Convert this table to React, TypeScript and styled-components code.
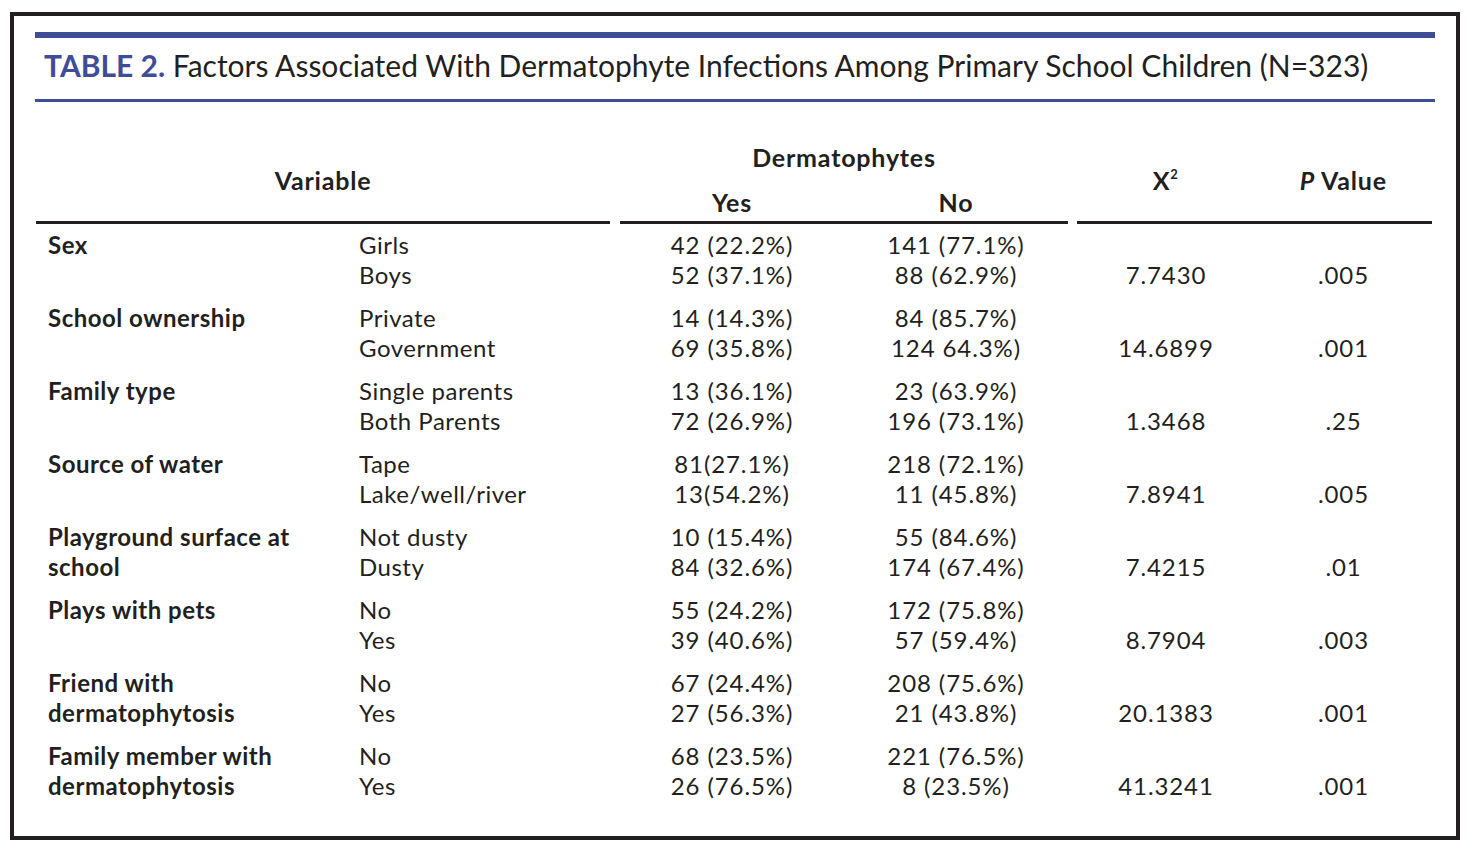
import React from 'react'
import styled, { createGlobalStyle } from 'styled-components'

const INK = '#231f20'
const BLUE = '#3f4d97'
const COLUMNS = '310px 264px 10px 224px 224px 9px 178px 177px'

type Group = {
  label: React.ReactNode
  levels: [string, string]
  yes: [string, string]
  no: [string, string]
  chi: string
  p: string
}

const groups: Group[] = [
  { label: 'Sex', levels: ['Girls', 'Boys'], yes: ['42 (22.2%)', '52 (37.1%)'], no: ['141 (77.1%)', '88 (62.9%)'], chi: '7.7430', p: '.005' },
  { label: 'School ownership', levels: ['Private', 'Government'], yes: ['14 (14.3%)', '69 (35.8%)'], no: ['84 (85.7%)', '124 64.3%)'], chi: '14.6899', p: '.001' },
  { label: 'Family type', levels: ['Single parents', 'Both Parents'], yes: ['13 (36.1%)', '72 (26.9%)'], no: ['23 (63.9%)', '196 (73.1%)'], chi: '1.3468', p: '.25' },
  { label: 'Source of water', levels: ['Tape', 'Lake/well/river'], yes: ['81(27.1%)', '13(54.2%)'], no: ['218 (72.1%)', '11 (45.8%)'], chi: '7.8941', p: '.005' },
  { label: <>Playground surface at<br />school</>, levels: ['Not dusty', 'Dusty'], yes: ['10 (15.4%)', '84 (32.6%)'], no: ['55 (84.6%)', '174 (67.4%)'], chi: '7.4215', p: '.01' },
  { label: 'Plays with pets', levels: ['No', 'Yes'], yes: ['55 (24.2%)', '39 (40.6%)'], no: ['172 (75.8%)', '57 (59.4%)'], chi: '8.7904', p: '.003' },
  { label: <>Friend with<br />dermatophytosis</>, levels: ['No', 'Yes'], yes: ['67 (24.4%)', '27 (56.3%)'], no: ['208 (75.6%)', '21 (43.8%)'], chi: '20.1383', p: '.001' },
  { label: <>Family member with<br />dermatophytosis</>, levels: ['No', 'Yes'], yes: ['68 (23.5%)', '26 (76.5%)'], no: ['221 (76.5%)', '8 (23.5%)'], chi: '41.3241', p: '.001' },
]

const GlobalStyle = createGlobalStyle`
  body {
    margin: 0;
    background: #ffffff;
    font-family: Lato, "Liberation Sans", sans-serif;
    color: ${INK};
  }
`

const Frame = styled.div`
  box-sizing: border-box;
  width: 1450px;
  height: 828px;
  margin: 12px 0 0 10px;
  border: 4px solid ${INK};
  padding: 16px 21px 0;
`

const TitleBar = styled.div`
  border-top: 6px solid ${BLUE};
  border-bottom: 3px solid ${BLUE};
  padding: 7px 0 14px 9px;
  font-size: 30px;
  line-height: 40px;
  white-space: nowrap;
`

const TableLabel = styled.span`
  color: ${BLUE};
  font-weight: 700;
`

const Table = styled.div`
  margin: 40px 0 0 1px;
  width: 1396px;
`

const HeadRow = styled.div`
  display: grid;
  grid-template-columns: ${COLUMNS};
`

const HeadGroup = styled.div<{ $col: string }>`
  grid-column: ${(p) => p.$col};
  display: grid;
  grid-template-columns: 1fr 1fr;
  grid-template-rows: 30px 30px;
  row-gap: 15px;
  padding-bottom: 4px;
  border-bottom: 3px solid ${INK};
  font-size: 25px;
  font-weight: 700;
  line-height: 30px;
  letter-spacing: 0.8px;
  text-align: center;
`

const HeadCell = styled.div<{ $span?: boolean; $full?: boolean }>`
  grid-column: ${(p) => (p.$full ? '1 / 3' : 'auto')};
  grid-row: ${(p) => (p.$span ? '1 / 3' : 'auto')};
  align-self: center;
`

const Sup = styled.sup`
  font-size: 13px;
  line-height: 0;
  vertical-align: 11px;
`

const Body = styled.div`
  display: flex;
  flex-direction: column;
  gap: 13px;
  margin-top: 6px;
`

const GroupRow = styled.div`
  display: grid;
  grid-template-columns: ${COLUMNS};
  grid-template-rows: 30px 30px;
  font-size: 24px;
  line-height: 30px;
  white-space: nowrap;
`

const Label = styled.div`
  grid-column: 1;
  grid-row: 1 / 3;
  padding-left: 12px;
  font-weight: 700;
  letter-spacing: 0.5px;
`

const Level = styled.div<{ $row: number }>`
  grid-column: 2;
  grid-row: ${(p) => p.$row};
  padding-left: 13px;
  letter-spacing: 0.5px;
`

const Value = styled.div<{ $col: number; $row: number }>`
  grid-column: ${(p) => p.$col};
  grid-row: ${(p) => p.$row};
  text-align: center;
  letter-spacing: 0.9px;
`

export default function App() {
  return (
    <>
      <GlobalStyle />
      <Frame>
        <TitleBar>
          <TableLabel>TABLE 2.</TableLabel> Factors Associated With Dermatophyte Infections Among
          Primary School Children (N=323)
        </TitleBar>
        <Table>
          <HeadRow>
            <HeadGroup $col="1 / 3">
              <HeadCell $span $full>Variable</HeadCell>
            </HeadGroup>
            <HeadGroup $col="4 / 6">
              <HeadCell $full>Dermatophytes</HeadCell>
              <HeadCell>Yes</HeadCell>
              <HeadCell>No</HeadCell>
            </HeadGroup>
            <HeadGroup $col="7 / 9">
              <HeadCell $span>
                X<Sup>2</Sup>
              </HeadCell>
              <HeadCell $span>
                <i>P</i> Value
              </HeadCell>
            </HeadGroup>
          </HeadRow>
          <Body>
            {groups.map((g, i) => (
              <GroupRow key={i}>
                <Label>{g.label}</Label>
                <Level $row={1}>{g.levels[0]}</Level>
                <Level $row={2}>{g.levels[1]}</Level>
                <Value $col={4} $row={1}>{g.yes[0]}</Value>
                <Value $col={4} $row={2}>{g.yes[1]}</Value>
                <Value $col={5} $row={1}>{g.no[0]}</Value>
                <Value $col={5} $row={2}>{g.no[1]}</Value>
                <Value $col={7} $row={2}>{g.chi}</Value>
                <Value $col={8} $row={2}>{g.p}</Value>
              </GroupRow>
            ))}
          </Body>
        </Table>
      </Frame>
    </>
  )
}
